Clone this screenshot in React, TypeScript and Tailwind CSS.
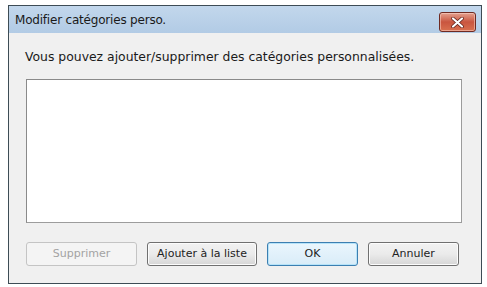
import React from 'react';

const font = { fontFamily: '"DejaVu Sans", "Liberation Sans", Arial, sans-serif' };

function CloseButton() {
  return (
    <div className="w-[37px] h-[20px] rounded-[3px] border border-[#6e2a22] bg-gradient-to-b from-[#e3a08f] via-[#c9553f] to-[#d9704f] flex items-center justify-center shadow-[inset_0_0_0_1px_rgba(255,220,210,0.5)]">
      <svg width="13" height="11" viewBox="0 0 13 11">
        <path d="M2 1.5 L11 9.5 M11 1.5 L2 9.5" stroke="#5a1d16" strokeWidth="3.6" strokeLinecap="round" />
        <path d="M2 1.5 L11 9.5 M11 1.5 L2 9.5" stroke="#ffffff" strokeWidth="2.2" strokeLinecap="round" />
      </svg>
    </div>
  );
}

function Button({ label, width, variant }: { label: string; width: string; variant?: 'disabled' | 'default' }) {
  if (variant === 'disabled') {
    return (
      <div className={`${width} h-[24px] rounded-[3px] border border-[#c4c4c4] bg-[#f4f4f4] flex items-center justify-center text-[11px] text-[#a3a3a3]`}>
        {label}
      </div>
    );
  }
  if (variant === 'default') {
    return (
      <div className={`${width} h-[24px] rounded-[3px] border border-[#3c7fb1] bg-gradient-to-b from-[#eaf6fd] to-[#d9ecf8] shadow-[inset_0_0_0_1px_#b6e3f9] flex items-center justify-center text-[11px] text-[#222]`}>
        {label}
      </div>
    );
  }
  return (
    <div className={`${width} h-[24px] rounded-[3px] border border-[#707070] bg-gradient-to-b from-[#f2f2f2] via-[#ebebeb] to-[#d6d6d6] shadow-[inset_0_0_0_1px_#fcfcfc] flex items-center justify-center text-[11px] text-[#222]`}>
      {label}
    </div>
  );
}

export default function App() {
  return (
    <div className="w-[487px] h-[287px] bg-white pt-[5px] pl-[8px]" style={font}>
      <div className="w-[474px] h-[279px] border border-[#3d4c55] flex flex-col">
        {/* Title bar */}
        <div className="h-[27px] bg-gradient-to-b from-[#c2d7ec] to-[#b2cbe5] flex items-center justify-between pl-[6px] pr-[5px]">
          <span className="text-[12px] text-[#1a1a1a] tracking-[-0.2px]">Modifier catégories perso.</span>
          <div className="self-start mt-[6px]">
            <CloseButton />
          </div>
        </div>

        {/* Content */}
        <div className="flex-1 bg-[#f0f0f0] flex flex-col pl-[16px] pr-[19px]">
          <div className="mt-[17px] text-[12.4px] text-[#1a1a1a] leading-[14px]">
            Vous pouvez ajouter/supprimer des catégories personnalisées.
          </div>
          <div className="ml-[1px] mt-[15px] w-[436px] h-[144px] bg-white border border-[#9c9c9c] border-t-[#8a8a8a] border-l-[#8a8a8a]" />
          <div className="mt-[19px] ml-[1px] flex gap-[10px]">
            <Button label="Supprimer" width="w-[111px]" variant="disabled" />
            <Button label="Ajouter à la liste" width="w-[110px]" />
            <Button label="OK" width="w-[91px]" variant="default" />
            <Button label="Annuler" width="w-[91px]" />
          </div>
        </div>
      </div>
    </div>
  );
}
